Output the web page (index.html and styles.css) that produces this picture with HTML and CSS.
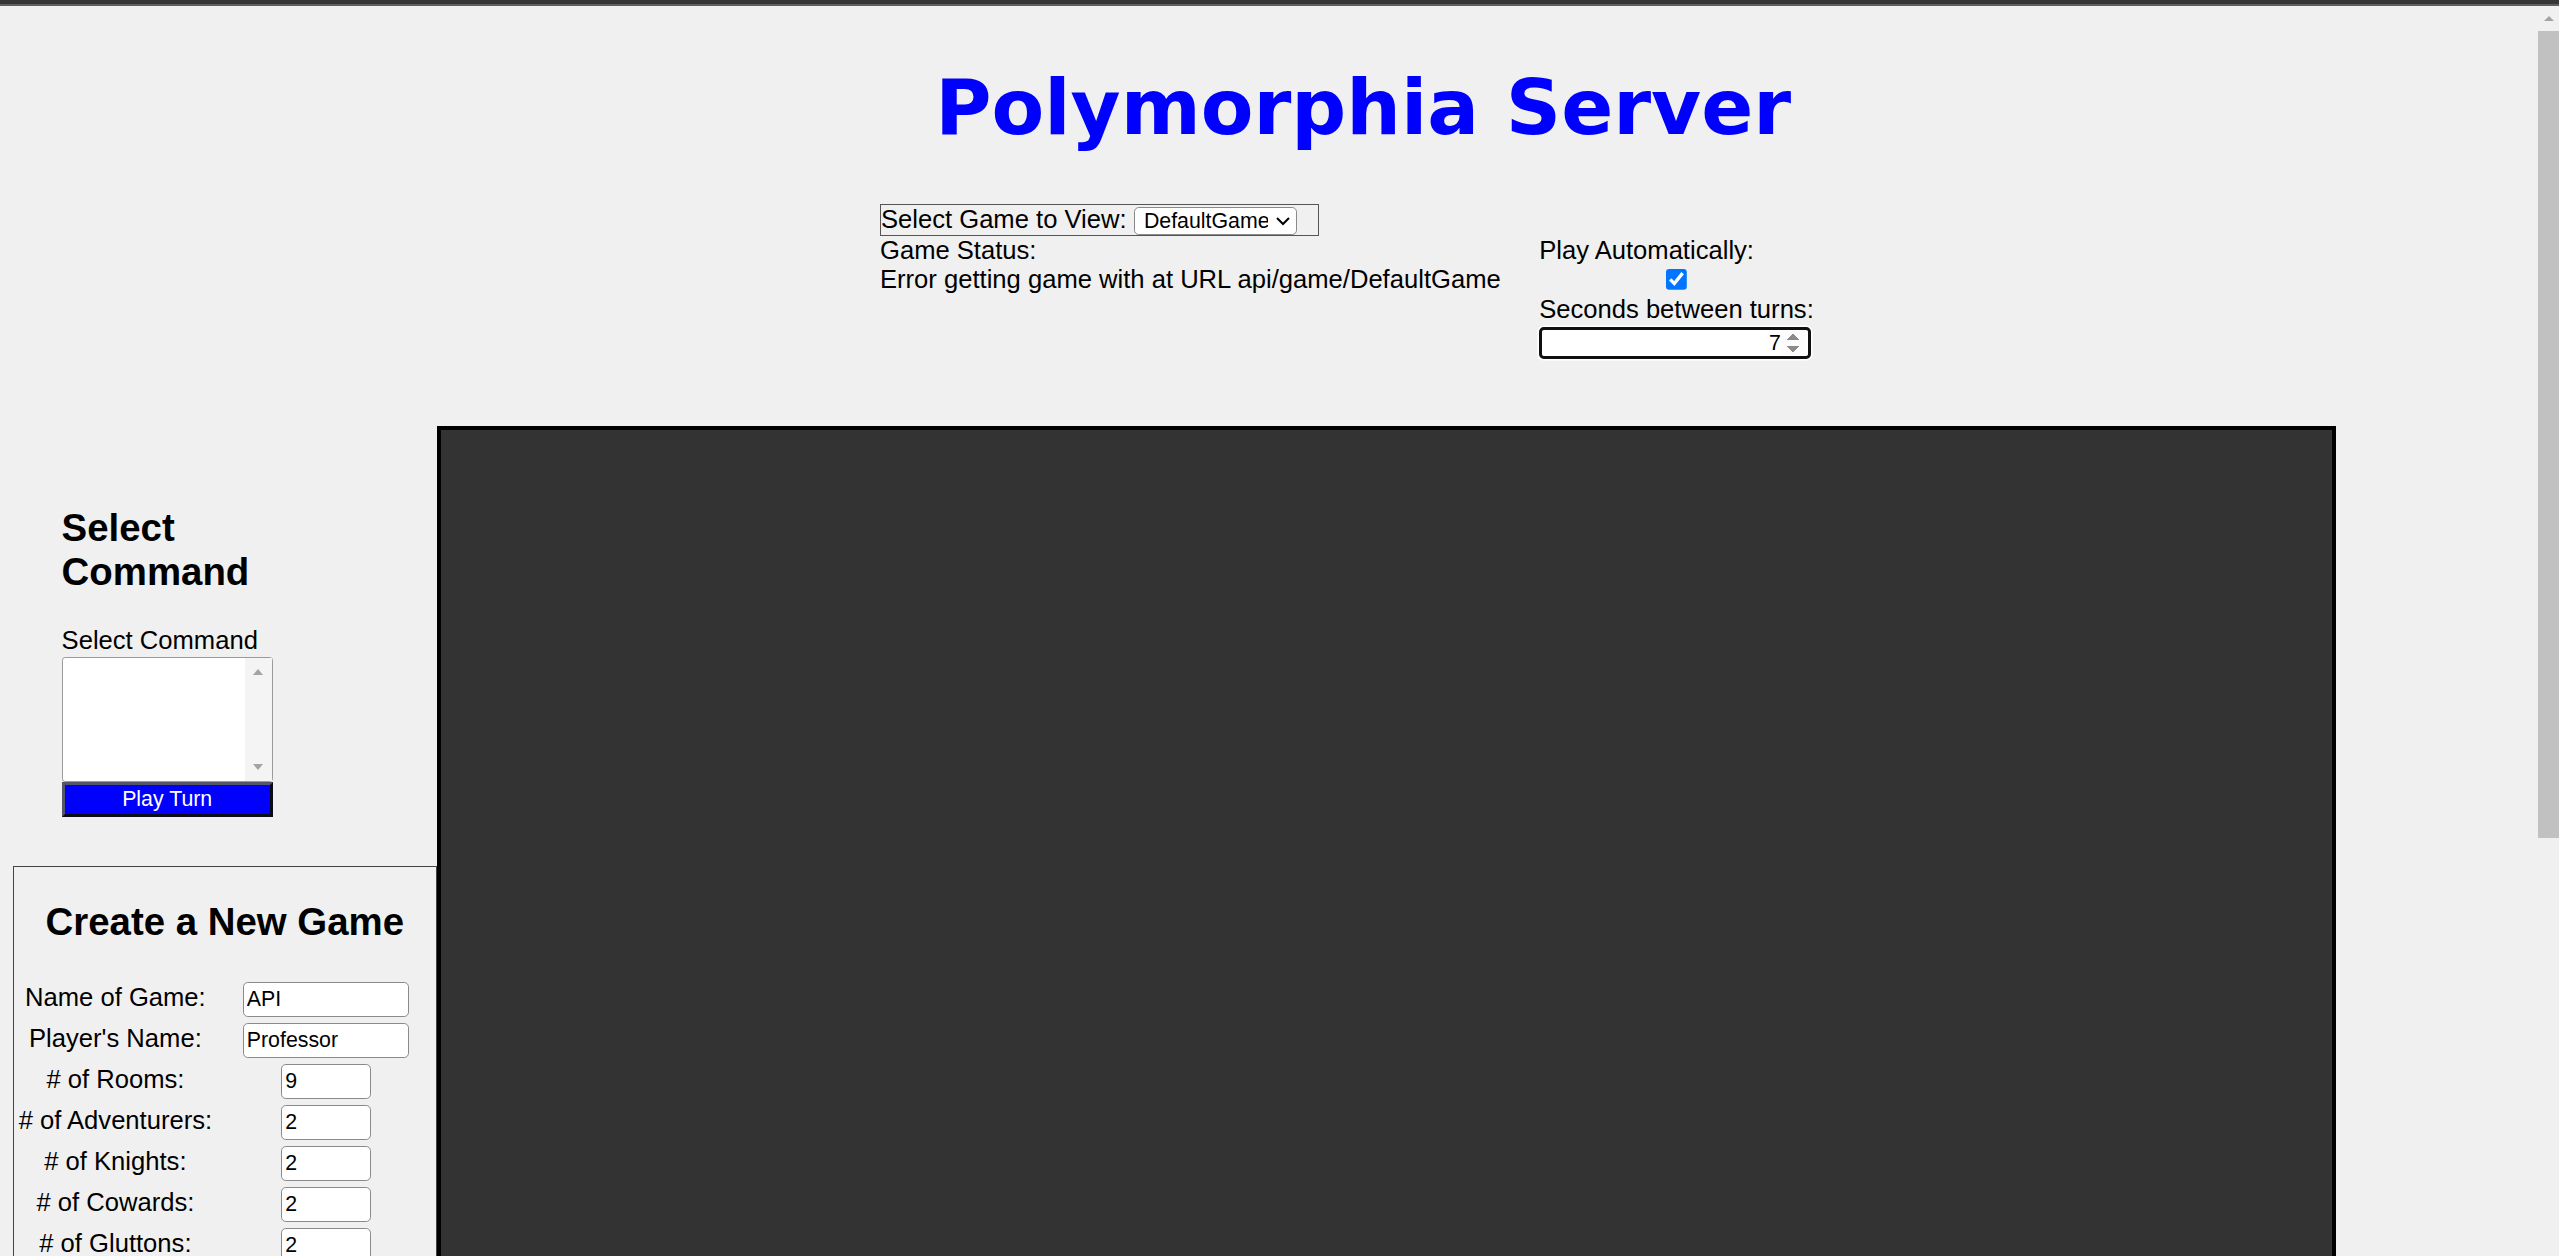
FILE: index.html
```html
<!DOCTYPE html>
<html lang="en">
<head>
<meta charset="utf-8">
<title>Polymorphia Server</title>
<link rel="stylesheet" href="styles.css">
</head>
<body>
<div class="topbar"></div>
<div class="vscroll" aria-hidden="true">
  <span class="vscroll-up"></span>
  <div class="vscroll-thumb"></div>
</div>
<div class="page">
  <h1 class="title">Polymorphia Server</h1>
  <div class="controls">
    <label class="game-picker">Select Game to View: <select class="game-select"><option>DefaultGame</option></select></label>
    <div class="status-row">
      <div class="status">
        <div>Game Status:</div>
        <div>Error getting game with at URL api/game/DefaultGame</div>
      </div>
      <div class="auto">
        <div>Play Automatically:</div>
        <input type="checkbox" class="auto-check" checked>
        <div>Seconds between turns:</div>
        <input type="number" class="turn-seconds" value="7">
      </div>
    </div>
  </div>
  <div class="main">
    <aside class="sidebar">
      <section class="command">
        <h2 class="panel-title">Select Command</h2>
        <div class="cmd-label">Select Command</div>
        <div class="listbox" role="listbox">
          <div class="listbox-scroll"><span class="arrow-up"></span><span class="arrow-down"></span></div>
        </div>
        <button class="play-turn">Play Turn</button>
      </section>
      <section class="create">
        <h2 class="create-title">Create a New Game</h2>
        <div class="form-grid">
          <label class="field-label">Name of Game:</label><input type="text" class="text-in" value="API">
          <label class="field-label">Player's Name:</label><input type="text" class="text-in" value="Professor">
          <label class="field-label"># of Rooms:</label><input type="number" class="num-in" value="9">
          <label class="field-label"># of Adventurers:</label><input type="number" class="num-in" value="2">
          <label class="field-label"># of Knights:</label><input type="number" class="num-in" value="2">
          <label class="field-label"># of Cowards:</label><input type="number" class="num-in" value="2">
          <label class="field-label"># of Gluttons:</label><input type="number" class="num-in" value="2">
        </div>
      </section>
    </aside>
    <div class="board"></div>
  </div>
</div>
</body>
</html>
```

FILE: styles.css
```css
html {
  background: #f0f0f0;
}

body {
  margin: 0;
  font-family: "Liberation Sans", Arial, sans-serif;
  font-size: 16px;
  color: #000;
}

.topbar {
  height: 4px;
  background: #363636;
  border-bottom: 2px solid #5e5e5e;
}

/* browser scrollbar look-alike, pinned over the right edge */
.vscroll {
  position: fixed;
  top: 6px;
  right: 0;
  bottom: 0;
  width: 21px;
  background: #f0f0f0;
  display: flex;
  flex-direction: column;
  align-items: center;
}
.vscroll-up {
  width: 0;
  height: 0;
  margin-top: 10px;
  border-left: 5.5px solid transparent;
  border-right: 5.5px solid transparent;
  border-bottom: 5px solid #a3a3a3;
}
.vscroll-thumb {
  align-self: stretch;
  margin-top: 10px;
  height: 807px;
  background: #c1c1c1;
}

.page {
  zoom: 1.6;
  padding: 0 8px 8px;
}

.title {
  width: 600px;
  margin: 35px 0 31px 544px;
  text-align: center;
  font-family: "DejaVu Sans", Verdana, sans-serif;
  font-weight: bold;
  font-size: 48px;
  line-height: 58px;
  color: #0000ff;
}

.controls {
  margin-left: 542px;
}

.game-picker {
  display: block;
  width: 273px;
  border: 1px solid #555;
  line-height: normal;
}

.game-select {
  font-family: "Liberation Sans", Arial, sans-serif;
  font-size: 13.333px;
  height: 17px;
  width: 102px;
  padding: 0 2px;
  border: 1px solid #8a8a8a;
  border-radius: 3px;
  background-color: #fff;
  color: #000;
}

.status-row {
  display: flex;
  align-items: flex-start;
}

.status {
  width: 412px;
  flex: none;
}

.auto {
  flex: none;
}

.auto-check {
  display: block;
  width: 13px;
  height: 13px;
  margin: 3px auto;
}

.turn-seconds {
  display: block;
  box-sizing: border-box;
  width: 170px;
  height: 20px;
  margin: 2px 0 0;
  padding: 0 2px;
  border: 2px solid #101010;
  border-radius: 3px;
  box-shadow: 0 0 0 1px #fff;
  outline: none;
  background: #fff;
  text-align: right;
  font-family: "Liberation Sans", Arial, sans-serif;
  font-size: 13.333px;
  color: #000;
}
.turn-seconds::-webkit-inner-spin-button {
  opacity: 1;
}

.main {
  display: flex;
  align-items: flex-start;
  margin-top: 41.5px;
}

.sidebar {
  width: 265px;
  flex: none;
}

.command {
  width: 132px;
  padding: 30.5px 30px 30.5px 30.5px;
}

.panel-title,
.create-title {
  font-size: 24px;
  font-weight: bold;
  margin: 19.92px 0;
  line-height: normal;
}

.cmd-label {
  margin-top: 2px;
}

.listbox {
  box-sizing: border-box;
  height: 78.5px;
  margin-top: 1px;
  border: 1px solid #9a9a9a;
  border-radius: 2px;
  background: #fff;
  display: flex;
  justify-content: flex-end;
}

.listbox-scroll {
  width: 17px;
  background: #f4f4f4;
  display: flex;
  flex-direction: column;
  justify-content: space-between;
  align-items: center;
  padding: 7px 0;
}

.arrow-up {
  width: 0;
  height: 0;
  border-left: 3.5px solid transparent;
  border-right: 3.5px solid transparent;
  border-bottom: 4px solid #a3a3a3;
}

.arrow-down {
  width: 0;
  height: 0;
  border-left: 3.5px solid transparent;
  border-right: 3.5px solid transparent;
  border-top: 4px solid #a3a3a3;
}

.play-turn {
  display: block;
  box-sizing: border-box;
  width: 132px;
  height: 22px;
  padding: 0;
  border: 2px solid;
  border-color: #56566a #0b0b1a #0b0b1a #56566a;
  background: #0000ff;
  color: #fff;
  font-family: "Liberation Sans", Arial, sans-serif;
  font-size: 13.333px;
}

.create {
  box-sizing: border-box;
  width: 265px;
  border: 1px solid #444;
}

.create-title {
  text-align: center;
  margin-top: 20.5px;
}

.form-grid {
  display: grid;
  grid-template-columns: 125px 134px;
  column-gap: 2px;
  row-gap: 4px;
  align-items: baseline;
  padding: 4px 1px 4px;
}

.field-label {
  text-align: center;
}

.text-in,
.num-in {
  box-sizing: border-box;
  height: 21.6px;
  padding: 1px 2px;
  border: 1px solid #8a8a8a;
  border-radius: 3px;
  background: #fff;
  font-family: "Liberation Sans", Arial, sans-serif;
  font-size: 13.333px;
  color: #000;
  justify-self: center;
}

.text-in {
  width: 104px;
}

.num-in {
  width: 56px;
}
.num-in::-webkit-inner-spin-button {
  -webkit-appearance: none;
  display: none;
}

.board {
  box-sizing: border-box;
  flex: none;
  width: 1187px;
  height: 890px;
  border: 3px solid #000;
  background: #333;
}
```
